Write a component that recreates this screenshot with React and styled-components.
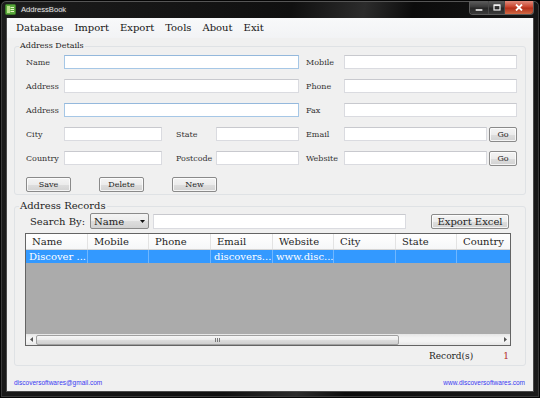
import React from 'react';
import styled, { createGlobalStyle } from 'styled-components';

const GlobalStyle = createGlobalStyle`
  html, body { margin: 0; padding: 0; background: #000; }
  #root { width: 540px; height: 398px; }
  * { box-sizing: border-box; }
`;

const serif = `"DejaVu Serif", "Liberation Serif", serif`;

const Window = styled.div`
  width: 540px;
  height: 398px;
  display: flex;
  flex-direction: column;
  padding: 0 5px 5px 5px;
  border: 1px solid #050505;
  border-radius: 6px 6px 0 0;
  background: linear-gradient(100deg, #1c1c1c 0%, #101010 48%, #2c2c2c 60%, #0c0c0c 68%, #1b1b1b 100%);
  box-shadow: inset 0 1px 0 #555, inset 1px 0 0 #3a3a3a, inset -1px 0 0 #3a3a3a, inset 0 -1px 0 #3a3a3a;
`;

const TitleBar = styled.div`
  height: 17px;
  display: flex;
  align-items: flex-start;
`;

const AppIcon = styled.div`
  width: 11px;
  height: 11px;
  margin: 3px 0 0 -1px;
  display: flex;
`;

const TitleText = styled.span`
  margin: 4px 0 0 5px;
  font: 7.6px "Liberation Sans", Arial, sans-serif;
  color: #e4e4e4;
  text-shadow: 0 0 4px rgba(255, 255, 255, 0.25);
  line-height: 9px;
`;

const WinButtons = styled.div`
  margin-left: auto;
  display: flex;
  height: 14px;
  border: 1px solid #5c5c5c;
  border-top: none;
  border-radius: 0 0 4px 4px;
  overflow: hidden;
`;

const WinButton = styled.div`
  width: ${p => p.$w}px;
  height: 100%;
  display: flex;
  align-items: center;
  justify-content: center;
  border-left: ${p => (p.$first ? 'none' : '1px solid #4a4a4a')};
  background: ${p => (p.$close
    ? 'linear-gradient(#e08b7c 0%, #c9452f 45%, #b4301b 55%, #d06a45 100%)'
    : 'linear-gradient(#5d5d5d 0%, #3a3a3a 45%, #262626 55%, #3c3c3c 100%)')};
`;

const Client = styled.div`
  flex: 1;
  display: flex;
  flex-direction: column;
  background: #f0f0f0;
  border: 1px solid #4a4a4a;
  border-top: none;
`;

const MenuBar = styled.div`
  height: 20px;
  display: flex;
  align-items: center;
  padding-left: 4px;
  gap: 1px;
  background: linear-gradient(#f8f9fa, #f2f3f5);
`;

const MenuItem = styled.span`
  padding: 0 5px;
  font: 10px ${serif};
  color: #151515;
  line-height: 20px;
`;

const Group = styled.fieldset`
  margin: ${p => p.$mt}px 7px 0 7px;
  padding: 0;
  border: 1px solid #dfe2e5;
  border-radius: 3px;
  min-width: 0;
`;

const Legend = styled.legend`
  margin-left: 4px;
  padding: 0 1px;
  font: ${p => p.$size}px ${serif};
  line-height: ${p => p.$lh}px;
  color: #1e1e1e;
`;

const FormGrid = styled.div`
  display: grid;
  grid-template-columns: 38px 98px 14px 40px 83px 7px 38px 143px 2px 28px;
  grid-template-rows: repeat(5, 14px);
  row-gap: 10px;
  align-items: center;
  padding: 4px 8px 0 11px;
`;

const Label = styled.span`
  grid-column: ${p => p.$col};
  grid-row: ${p => p.$row};
  font: 8px ${serif};
  color: #333;
  white-space: nowrap;
`;

const Input = styled.div`
  grid-column: ${p => p.$col};
  grid-row: ${p => p.$row};
  height: ${p => p.$h || 14}px;
  width: ${p => (p.$w ? `${p.$w}px` : 'auto')};
  background: #fff;
  border: 1px solid ${p => (p.$focus ? '#a6c7e6' : '#dadbe0')};
  border-top-color: ${p => (p.$focus ? '#94b8dc' : '#c8c9ce')};
`;

const Button = styled.div`
  grid-column: ${p => p.$col || 'auto'};
  grid-row: ${p => p.$row || 'auto'};
  width: ${p => p.$w}px;
  height: 15px;
  display: flex;
  align-items: center;
  justify-content: center;
  font: ${p => p.$size || 8}px ${serif};
  color: #222;
  border: 1px solid #8a8a8a;
  border-radius: 2px;
  background: linear-gradient(#f4f4f4 0%, #ececec 50%, #dedede 51%, #d2d2d2 100%);
  box-shadow: inset 0 0 0 1px rgba(255, 255, 255, 0.75);
`;

const ButtonRow = styled.div`
  display: flex;
  gap: 28px;
  padding: 12px 0 2px 11px;
`;

const SearchRow = styled.div`
  display: flex;
  align-items: center;
  height: 16px;
  margin: 1px 0 0 0;
`;

const SearchLabel = styled.span`
  margin: 0 5px 0 5px;
  font: 10px ${serif};
  color: #1e1e1e;
`;

const Combo = styled.div`
  width: 59px;
  height: 16px;
  display: flex;
  align-items: center;
  justify-content: space-between;
  padding: 0 3px 0 3px;
  font: 10px ${serif};
  color: #1e1e1e;
  border: 1px solid #8a8a8a;
  border-radius: 2px;
  background: linear-gradient(#f4f4f4 0%, #ececec 50%, #dedede 51%, #d2d2d2 100%);
`;

const RecordsBody = styled.div`
  padding: 0 14px 0 10px;
`;

const Table = styled.div`
  margin-top: 4px;
  height: 113px;
  border: 1px solid #646464;
  background: #ababab;
  display: flex;
  flex-direction: column;
  overflow: hidden;
`;

const Row = styled.div`
  display: grid;
  grid-template-columns: 62px 61px 62px 62px 61px 62px 61px 61px;
  height: ${p => p.$h}px;
  flex-shrink: 0;
  background: ${p => p.$bg};
  border-bottom: ${p => (p.$header ? '1px solid #d5d5d5' : 'none')};
`;

const Cell = styled.div`
  padding-left: ${p => (p.$header ? 6 : 3)}px;
  display: flex;
  align-items: center;
  font: 10px ${serif};
  color: ${p => (p.$header ? '#1e1e1e' : '#fff')};
  white-space: nowrap;
  overflow: hidden;
  border-right: 1px solid ${p => (p.$header ? '#e3e3e3' : 'rgba(255,255,255,0.3)')};
`;

const GridFill = styled.div`
  flex: 1;
`;

const HScroll = styled.div`
  height: 11px;
  display: flex;
  align-items: center;
  background: linear-gradient(#e6e6e6, #f4f4f4 35%, #f4f4f4 65%, #e6e6e6);
`;

const ScrollArrow = styled.div`
  width: 10px;
  height: 100%;
  display: flex;
  align-items: center;
  justify-content: center;
`;

const Thumb = styled.div`
  width: 363px;
  height: 10px;
  display: flex;
  align-items: center;
  justify-content: center;
  border: 1px solid #a0a0a0;
  border-radius: 2px;
  background: linear-gradient(#f6f6f6 0%, #ececec 45%, #dcdcdc 55%, #d0d0d0 100%);
`;

const CountRow = styled.div`
  height: 19px;
  display: flex;
  align-items: center;
  justify-content: flex-end;
  gap: 30px;
  padding-right: 2px;
  font: 9px ${serif};
  color: #1e1e1e;
`;

const Count = styled.span`
  color: #b22a2a;
`;

const Footer = styled.div`
  flex: 1;
  display: flex;
  align-items: center;
  justify-content: space-between;
  padding: 7px 8px 0 7px;
`;

const FooterLink = styled.span`
  font: 6.5px "Liberation Sans", Arial, sans-serif;
  color: #3a3af2;
`;

const columns = ['Name', 'Mobile', 'Phone', 'Email', 'Website', 'City', 'State', 'Country'];
const record = ['Discover ...', '', '', 'discovers...', 'www.disc...', '', '', ''];

export default function App() {
  return (
    <>
      <GlobalStyle />
      <Window>
        <TitleBar>
          <AppIcon>
            <svg width="11" height="11" viewBox="0 0 11 11">
              <rect x="0.5" y="0.5" width="10" height="10" rx="1" fill="#5aa83c" stroke="#3d7a2a" />
              <rect x="2" y="2" width="3" height="7" fill="#b8e08a" />
              <rect x="5.5" y="3" width="3.5" height="1" fill="#e9f6c8" />
              <rect x="5.5" y="5" width="3.5" height="1" fill="#e9f6c8" />
              <rect x="5.5" y="7" width="3.5" height="1" fill="#e9f6c8" />
            </svg>
          </AppIcon>
          <TitleText>AddressBook</TitleText>
          <WinButtons>
            <WinButton $w={18} $first>
              <svg width="8" height="8" viewBox="0 0 8 8"><rect x="0.5" y="5" width="7" height="2" fill="#f2f2f2" stroke="#333" strokeWidth="0.4" /></svg>
            </WinButton>
            <WinButton $w={16}>
              <svg width="8" height="7" viewBox="0 0 8 7"><rect x="1" y="1" width="6" height="5" fill="none" stroke="#f2f2f2" strokeWidth="1.2" /><rect x="1" y="0.6" width="6" height="1.4" fill="#f2f2f2" /></svg>
            </WinButton>
            <WinButton $w={29} $close>
              <svg width="8" height="7" viewBox="0 0 8 7"><path d="M1 0.5 L7 6.5 M7 0.5 L1 6.5" stroke="#fff" strokeWidth="1.8" /></svg>
            </WinButton>
          </WinButtons>
        </TitleBar>
        <Client>
          <MenuBar>
            {['Database', 'Import', 'Export', 'Tools', 'About', 'Exit'].map(m => (
              <MenuItem key={m}>{m}</MenuItem>
            ))}
          </MenuBar>

          <Group $mt={3}>
            <Legend $size={8} $lh={10}>Address Details</Legend>
            <FormGrid>
              <Label $col="1" $row="1">Name</Label>
              <Input $col="2 / 6" $row="1" $focus />
              <Label $col="7" $row="1">Mobile</Label>
              <Input $col="8 / 11" $row="1" />

              <Label $col="1" $row="2">Address</Label>
              <Input $col="2 / 6" $row="2" />
              <Label $col="7" $row="2">Phone</Label>
              <Input $col="8 / 11" $row="2" />

              <Label $col="1" $row="3">Address</Label>
              <Input $col="2 / 6" $row="3" $focus />
              <Label $col="7" $row="3">Fax</Label>
              <Input $col="8 / 11" $row="3" />

              <Label $col="1" $row="4">City</Label>
              <Input $col="2" $row="4" />
              <Label $col="4" $row="4">State</Label>
              <Input $col="5" $row="4" />
              <Label $col="7" $row="4">Email</Label>
              <Input $col="8" $row="4" />
              <Button $col="10" $row="4" $w={28}>Go</Button>

              <Label $col="1" $row="5">Country</Label>
              <Input $col="2" $row="5" />
              <Label $col="4" $row="5">Postcode</Label>
              <Input $col="5" $row="5" />
              <Label $col="7" $row="5">Website</Label>
              <Input $col="8" $row="5" />
              <Button $col="10" $row="5" $w={28}>Go</Button>
            </FormGrid>
            <ButtonRow>
              <Button $w={45}>Save</Button>
              <Button $w={45}>Delete</Button>
              <Button $w={45}>New</Button>
            </ButtonRow>
          </Group>

          <Group $mt={5}>
            <Legend $size={10} $lh={12}>Address Records</Legend>
            <RecordsBody>
              <SearchRow>
                <SearchLabel>Search By:</SearchLabel>
                <Combo>
                  Name
                  <svg width="5" height="3" viewBox="0 0 5 3"><path d="M0 0 H5 L2.5 3 Z" fill="#111" /></svg>
                </Combo>
                <Input $w={253} $h={15} style={{ marginLeft: 4 }} />
                <Button $w={78} $size={10} style={{ marginLeft: 'auto', marginRight: 2 }}>Export Excel</Button>
              </SearchRow>
              <Table>
                <Row $h={16} $bg="linear-gradient(#ffffff, #f6f7f8)" $header>
                  {columns.map(c => <Cell key={c} $header>{c}</Cell>)}
                </Row>
                <Row $h={13} $bg="#3399ff">
                  {record.map((v, i) => <Cell key={i}>{v}</Cell>)}
                </Row>
                <GridFill />
                <HScroll>
                  <ScrollArrow>
                    <svg width="3" height="5" viewBox="0 0 3 5"><path d="M3 0 V5 L0 2.5 Z" fill="#555" /></svg>
                  </ScrollArrow>
                  <Thumb>
                    <svg width="6" height="4" viewBox="0 0 6 4"><path d="M0.5 0 V4 M2.5 0 V4 M4.5 0 V4" stroke="#7a7a7a" strokeWidth="1" /></svg>
                  </Thumb>
                  <GridFill />
                  <ScrollArrow>
                    <svg width="3" height="5" viewBox="0 0 3 5"><path d="M0 0 V5 L3 2.5 Z" fill="#555" /></svg>
                  </ScrollArrow>
                </HScroll>
              </Table>
              <CountRow>
                <span>Record(s)</span>
                <Count>1</Count>
              </CountRow>
            </RecordsBody>
          </Group>

          <Footer>
            <FooterLink>discoversoftwares@gmail.com</FooterLink>
            <FooterLink>www.discoversoftwares.com</FooterLink>
          </Footer>
        </Client>
      </Window>
    </>
  );
}
